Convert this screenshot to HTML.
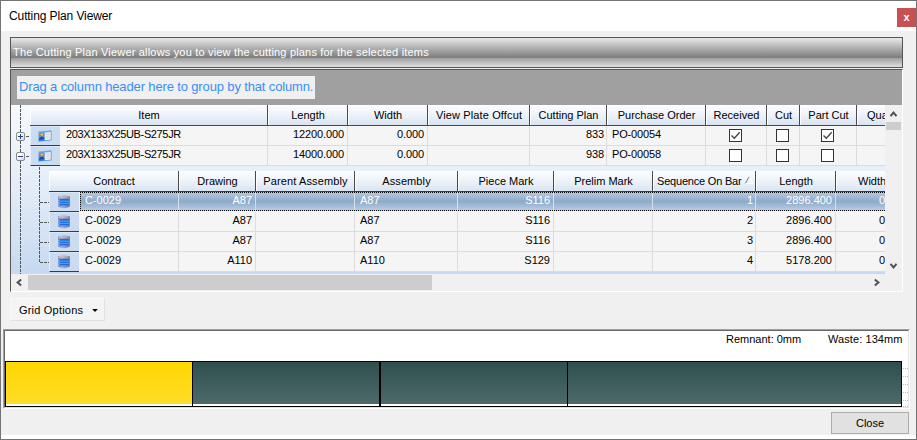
<!DOCTYPE html>
<html><head><meta charset="utf-8"><title>Cutting Plan Viewer</title>
<style>
*{box-sizing:border-box;margin:0;padding:0}
html,body{width:917px;height:440px;overflow:hidden;background:#f0f0f0}
body{position:relative;font-family:"Liberation Sans",sans-serif;font-size:11px;color:#000;line-height:1}
.a{position:absolute}
.t{position:absolute;white-space:nowrap;line-height:14px;height:14px}
.r{text-align:right}
.n{letter-spacing:-0.1px}
.c{text-align:center}
.hd{position:absolute;background:linear-gradient(to bottom,#fbfcfe 0%,#eef3fa 45%,#d9e4f3 100%);border-left:1px solid #fff;border-top:1px solid #fff}
.hs{position:absolute;width:1px;background:#4a4a4a}
.vs{position:absolute;width:1px;background:#dcdcdc}
.hl{position:absolute;height:1px;background:#dcdcdc}
.rh{position:absolute;background:#ccdcf0;border-left:1px solid #e6eefa;border-top:1px solid #dde8f6;border-bottom:1px solid #1f4080}
.cb{position:absolute;width:13px;height:13px;border:1px solid #333;background:#fff}
.ex{position:absolute;width:9px;height:9px;border:1px solid #8a8a8a;border-radius:2px;background:linear-gradient(135deg,#fff 30%,#d8d8d8)}
</style></head><body>

<div class="a" style="left:0;top:0;width:917px;height:440px;border:1px solid #747474"></div>
<div class="a" style="left:1px;top:1px;width:915px;height:30px;background:#fff"></div>
<div class="a" style="left:1px;top:435px;width:915px;height:4px;background:#fff"></div>
<div class="t" style="left:9px;top:9px;font-size:12px;line-height:15px;height:15px;letter-spacing:-0.1px" id="title">Cutting Plan Viewer</div>
<div class="a" style="left:897px;top:8px;width:19px;height:19px;background:#c75050"></div>
<div class="t" style="left:897px;top:10px;width:19px;text-align:center;color:#fff;font-weight:bold;font-size:11px;line-height:14px" id="xbtn">x</div>
<div class="a" style="left:10px;top:37px;width:893px;height:31px;border:1px solid #555;background:linear-gradient(to bottom,#e8e8e8 0%,#7e7e7e 67%,#a0a0a0 70%,#e0e0e0 100%)"></div>
<div class="t" style="left:13px;top:45px;color:#fff;letter-spacing:0.18px" id="banner">The Cutting Plan Viewer allows you to view the cutting plans for the selected items</div>
<div class="a" style="left:10px;top:69px;width:893px;height:223px;background:#a0a0a0;border-left:1px solid #555;border-top:1px solid #555;border-right:1px solid #fff;border-bottom:1px solid #fff"></div>
<div class="a" style="left:17px;top:76px;width:298px;height:23px;background:#f0f0f0"></div>
<div class="t" style="left:19px;top:79px;font-size:13px;line-height:16px;height:16px;color:#3a8ef8;letter-spacing:-0.14px" id="groupby">Drag a column header here to group by that column.</div>
<div class="a" style="left:11px;top:105px;width:874px;height:169px;background:linear-gradient(to bottom,#f6f9fd 0%,#e3ecf8 50%,#c6d9f0 100%)"></div>
<div class="a" style="left:885px;top:105px;width:17px;height:169px;background:#f0f0f0"></div>
<div class="a" style="left:11px;top:274px;width:891px;height:17px;background:#f0f0f0"></div>
<div class="a" style="left:886px;top:122px;width:15px;height:8px;background:#cdcdcd"></div>
<div class="a" style="left:28px;top:275px;width:404px;height:15px;background:#cdcdcd"></div>
<svg class="a" style="left:886px;top:105px" width="16" height="169" viewBox="0 0 16 169"><path d="M4.5 11.2 L7.5 7.6 L10.5 11.2" fill="none" stroke="#505050" stroke-width="2"/><path d="M4.5 158.8 L7.5 162.4 L10.5 158.8" fill="none" stroke="#505050" stroke-width="2"/></svg>
<svg class="a" style="left:11px;top:274px" width="875" height="17" viewBox="0 0 875 17"><path d="M10.2 5.5 L6.6 8.5 L10.2 11.5" fill="none" stroke="#505050" stroke-width="2"/><path d="M863.8 5.5 L867.4 8.5 L863.8 11.5" fill="none" stroke="#505050" stroke-width="2"/></svg>
<div class="hd" style="left:30px;top:105px;width:855px;height:20px"></div>
<div class="a" style="left:30px;top:125px;width:855px;height:1px;background:#4a4a4a"></div>
<div class="hs" style="left:267px;top:105px;height:21px"></div>
<div class="a" style="left:268px;top:105px;width:1px;height:20px;background:#fff"></div>
<div class="t c" style="left:30px;top:108px;width:238px;" id="ph0">Item</div>
<div class="hs" style="left:347px;top:105px;height:21px"></div>
<div class="a" style="left:348px;top:105px;width:1px;height:20px;background:#fff"></div>
<div class="t c" style="left:268px;top:108px;width:80px;" id="ph1">Length</div>
<div class="hs" style="left:427px;top:105px;height:21px"></div>
<div class="a" style="left:428px;top:105px;width:1px;height:20px;background:#fff"></div>
<div class="t c" style="left:348px;top:108px;width:80px;" id="ph2">Width</div>
<div class="hs" style="left:529px;top:105px;height:21px"></div>
<div class="a" style="left:530px;top:105px;width:1px;height:20px;background:#fff"></div>
<div class="t c" style="left:428px;top:108px;width:102px;letter-spacing:0.13px;" id="ph3">View Plate Offcut</div>
<div class="hs" style="left:606px;top:105px;height:21px"></div>
<div class="a" style="left:607px;top:105px;width:1px;height:20px;background:#fff"></div>
<div class="t c" style="left:530px;top:108px;width:77px;" id="ph4">Cutting Plan</div>
<div class="hs" style="left:705px;top:105px;height:21px"></div>
<div class="a" style="left:706px;top:105px;width:1px;height:20px;background:#fff"></div>
<div class="t c" style="left:607px;top:108px;width:99px;" id="ph5">Purchase Order</div>
<div class="hs" style="left:766px;top:105px;height:21px"></div>
<div class="a" style="left:767px;top:105px;width:1px;height:20px;background:#fff"></div>
<div class="t c" style="left:706px;top:108px;width:61px;" id="ph6">Received</div>
<div class="hs" style="left:799px;top:105px;height:21px"></div>
<div class="a" style="left:800px;top:105px;width:1px;height:20px;background:#fff"></div>
<div class="t c" style="left:767px;top:108px;width:33px;" id="ph7">Cut</div>
<div class="hs" style="left:856px;top:105px;height:21px"></div>
<div class="a" style="left:857px;top:105px;width:1px;height:20px;background:#fff"></div>
<div class="t c" style="left:800px;top:108px;width:57px;" id="ph8">Part Cut</div>
<div class="t" style="left:867px;top:108px;width:18px;overflow:hidden" id="ph9">Qua</div>
<div class="a" style="left:60px;top:126px;width:825px;height:20px;background:#f5f5f5"></div>
<div class="hl" style="left:60px;top:145px;width:825px"></div>
<div class="vs" style="left:267px;top:126px;height:20px"></div>
<div class="vs" style="left:347px;top:126px;height:20px"></div>
<div class="vs" style="left:427px;top:126px;height:20px"></div>
<div class="vs" style="left:529px;top:126px;height:20px"></div>
<div class="vs" style="left:606px;top:126px;height:20px"></div>
<div class="vs" style="left:705px;top:126px;height:20px"></div>
<div class="vs" style="left:766px;top:126px;height:20px"></div>
<div class="vs" style="left:799px;top:126px;height:20px"></div>
<div class="vs" style="left:856px;top:126px;height:20px"></div>
<div class="rh" style="left:30px;top:126px;width:30px;height:20px"></div>
<svg class="a" style="left:38px;top:130px" width="14" height="12" viewBox="0 0 14 12"><defs><linearGradient id="cg0" x1="0" y1="0" x2="0" y2="1"><stop offset="0" stop-color="#6db0f6"/><stop offset="1" stop-color="#2f7fe0"/></linearGradient></defs><path d="M0.5 1.6 L13.5 0.3 L13.5 10.2 L0.5 11.6 Z" fill="url(#cg0)"/><circle cx="3.7" cy="4.6" r="1.7" fill="#f09018" stroke="#c87008" stroke-width="0.4"/><path d="M3 4.3 H4.6 V5 H3.4" fill="none" stroke="#fde0b0" stroke-width="0.6"/><path d="M1.2 8.4 Q3.6 5.2 6.2 8.2 L6.2 9.2 L1.2 9.7 Z" fill="#1a48a8"/><path d="M6.9 2.5 L13.6 1.9 L13.6 9.6 L6.9 10.3 Z" fill="#f6f6f6"/><path d="M12.7 2 L13.7 1.9 L13.7 9.6 L12.7 9.7 Z" fill="#9a9a9a"/><path d="M8 4.2 L12 3.9 M8 6.2 L12 5.9 M8 8.2 L12 7.9" stroke="#c4c4c4" stroke-width="0.8"/><path d="M6.9 2.5 L6.9 10.3" stroke="#e0c8a8" stroke-width="0.5"/></svg>
<div class="t" style="left:66px;top:127px;letter-spacing:-0.36px" id="pi0">203X133X25UB-S275JR</div>
<div class="t r n" style="left:268px;top:127px;width:76px">12200.000</div>
<div class="t r n" style="left:348px;top:127px;width:76px">0.000</div>
<div class="t r n" style="left:530px;top:127px;width:74px">833</div>
<div class="t" style="left:612px;top:127px;letter-spacing:-0.15px">PO-00054</div>
<div class="cb" style="left:729px;top:129px"><svg width="11" height="11" viewBox="0 0 11 11" style="display:block"><path d="M1.5 5.5 L4.3 8.3 L9.7 2.3" fill="none" stroke="#444" stroke-width="1.3"/></svg></div>
<div class="cb" style="left:776px;top:129px"></div>
<div class="cb" style="left:821px;top:129px"><svg width="11" height="11" viewBox="0 0 11 11" style="display:block"><path d="M1.5 5.5 L4.3 8.3 L9.7 2.3" fill="none" stroke="#444" stroke-width="1.3"/></svg></div>
<div class="a" style="left:60px;top:146px;width:825px;height:20px;background:#f5f5f5"></div>
<div class="hl" style="left:60px;top:165px;width:825px"></div>
<div class="vs" style="left:267px;top:146px;height:20px"></div>
<div class="vs" style="left:347px;top:146px;height:20px"></div>
<div class="vs" style="left:427px;top:146px;height:20px"></div>
<div class="vs" style="left:529px;top:146px;height:20px"></div>
<div class="vs" style="left:606px;top:146px;height:20px"></div>
<div class="vs" style="left:705px;top:146px;height:20px"></div>
<div class="vs" style="left:766px;top:146px;height:20px"></div>
<div class="vs" style="left:799px;top:146px;height:20px"></div>
<div class="vs" style="left:856px;top:146px;height:20px"></div>
<div class="rh" style="left:30px;top:146px;width:30px;height:20px"></div>
<svg class="a" style="left:38px;top:150px" width="14" height="12" viewBox="0 0 14 12"><defs><linearGradient id="cg1" x1="0" y1="0" x2="0" y2="1"><stop offset="0" stop-color="#6db0f6"/><stop offset="1" stop-color="#2f7fe0"/></linearGradient></defs><path d="M0.5 1.6 L13.5 0.3 L13.5 10.2 L0.5 11.6 Z" fill="url(#cg1)"/><circle cx="3.7" cy="4.6" r="1.7" fill="#f09018" stroke="#c87008" stroke-width="0.4"/><path d="M3 4.3 H4.6 V5 H3.4" fill="none" stroke="#fde0b0" stroke-width="0.6"/><path d="M1.2 8.4 Q3.6 5.2 6.2 8.2 L6.2 9.2 L1.2 9.7 Z" fill="#1a48a8"/><path d="M6.9 2.5 L13.6 1.9 L13.6 9.6 L6.9 10.3 Z" fill="#f6f6f6"/><path d="M12.7 2 L13.7 1.9 L13.7 9.6 L12.7 9.7 Z" fill="#9a9a9a"/><path d="M8 4.2 L12 3.9 M8 6.2 L12 5.9 M8 8.2 L12 7.9" stroke="#c4c4c4" stroke-width="0.8"/><path d="M6.9 2.5 L6.9 10.3" stroke="#e0c8a8" stroke-width="0.5"/></svg>
<div class="t" style="left:66px;top:147px;letter-spacing:-0.36px" id="pi1">203X133X25UB-S275JR</div>
<div class="t r n" style="left:268px;top:147px;width:76px">14000.000</div>
<div class="t r n" style="left:348px;top:147px;width:76px">0.000</div>
<div class="t r n" style="left:530px;top:147px;width:74px">938</div>
<div class="t" style="left:612px;top:147px;letter-spacing:-0.15px">PO-00058</div>
<div class="cb" style="left:729px;top:149px"></div>
<div class="cb" style="left:776px;top:149px"></div>
<div class="cb" style="left:821px;top:149px"></div>
<div class="a" style="left:20px;top:105px;width:1px;height:169px;background:repeating-linear-gradient(to bottom,#555 0,#555 3px,transparent 3px,transparent 4px)"></div>
<div class="a" style="left:26px;top:136px;width:3px;height:1px;background:#555"></div>
<div class="ex" style="left:16px;top:132px"></div>
<div class="a" style="left:18px;top:136px;width:5px;height:1px;background:#1f3f90"></div>
<div class="a" style="left:20px;top:134px;width:1px;height:5px;background:#1f3f90"></div>
<div class="a" style="left:26px;top:156px;width:3px;height:1px;background:#555"></div>
<div class="ex" style="left:16px;top:152px"></div>
<div class="a" style="left:18px;top:156px;width:5px;height:1px;background:#1f3f90"></div>
<div class="hd" style="left:49px;top:171px;width:836px;height:20px"></div>
<div class="a" style="left:49px;top:191px;width:836px;height:1px;background:#3a3a3a"></div>
<div class="hs" style="left:178px;top:171px;height:21px"></div>
<div class="a" style="left:179px;top:171px;width:1px;height:20px;background:#fff"></div>
<div class="t c" style="left:49px;top:174px;width:130px;" id="ch0">Contract</div>
<div class="hs" style="left:255px;top:171px;height:21px"></div>
<div class="a" style="left:256px;top:171px;width:1px;height:20px;background:#fff"></div>
<div class="t c" style="left:179px;top:174px;width:77px;" id="ch1">Drawing</div>
<div class="hs" style="left:354px;top:171px;height:21px"></div>
<div class="a" style="left:355px;top:171px;width:1px;height:20px;background:#fff"></div>
<div class="t c" style="left:256px;top:174px;width:99px;letter-spacing:0.13px;" id="ch2">Parent Assembly</div>
<div class="hs" style="left:457px;top:171px;height:21px"></div>
<div class="a" style="left:458px;top:171px;width:1px;height:20px;background:#fff"></div>
<div class="t c" style="left:355px;top:174px;width:103px;letter-spacing:0.1px;" id="ch3">Assembly</div>
<div class="hs" style="left:553px;top:171px;height:21px"></div>
<div class="a" style="left:554px;top:171px;width:1px;height:20px;background:#fff"></div>
<div class="t c" style="left:458px;top:174px;width:96px;" id="ch4">Piece Mark</div>
<div class="hs" style="left:652px;top:171px;height:21px"></div>
<div class="a" style="left:653px;top:171px;width:1px;height:20px;background:#fff"></div>
<div class="t c" style="left:554px;top:174px;width:99px;" id="ch5">Prelim Mark</div>
<div class="hs" style="left:755px;top:171px;height:21px"></div>
<div class="a" style="left:756px;top:171px;width:1px;height:20px;background:#fff"></div>
<div class="t" style="left:657px;top:174px;letter-spacing:-0.2px" id="ch6">Sequence On Bar</div>
<svg class="a" style="left:744px;top:176px" width="10" height="9" viewBox="0 0 10 9"><path d="M5.2 1 L8.6 7.5 H1.4" fill="none" stroke="#fff" stroke-width="1.2"/><path d="M1.4 7.3 L5 1" fill="none" stroke="#7c7c7c" stroke-width="1"/></svg>
<div class="hs" style="left:835px;top:171px;height:21px"></div>
<div class="a" style="left:836px;top:171px;width:1px;height:20px;background:#fff"></div>
<div class="t c" style="left:756px;top:174px;width:80px;" id="ch7">Length</div>
<div class="t" style="left:858px;top:174px;width:27px;overflow:hidden" id="ch8">Width</div>
<div class="a" style="left:39px;top:167px;width:1px;height:95px;background:repeating-linear-gradient(to bottom,#555 0,#555 3px,transparent 3px,transparent 4px)"></div>
<div class="a" style="left:80px;top:192px;width:805px;height:19px;background:linear-gradient(to bottom,#b6c9e1 0%,#8daaca 50%,#a9c0db 80%,#bccee5 100%)"></div>
<div class="a" style="left:80px;top:211px;width:805px;height:1px;background:#f5f5f5"></div>
<div class="vs" style="left:178px;top:192px;height:19px;background:#d4dde8"></div>
<div class="vs" style="left:255px;top:192px;height:19px;background:#d4dde8"></div>
<div class="vs" style="left:354px;top:192px;height:19px;background:#d4dde8"></div>
<div class="vs" style="left:457px;top:192px;height:19px;background:#d4dde8"></div>
<div class="vs" style="left:553px;top:192px;height:19px;background:#d4dde8"></div>
<div class="vs" style="left:652px;top:192px;height:19px;background:#d4dde8"></div>
<div class="vs" style="left:755px;top:192px;height:19px;background:#d4dde8"></div>
<div class="vs" style="left:835px;top:192px;height:19px;background:#d4dde8"></div>
<div class="a" style="left:80px;top:192px;width:805px;height:19px;border:1px dotted #000;border-right:none"></div>
<div class="rh" style="left:49px;top:192px;width:30px;height:20px"></div>
<div class="a" style="left:79px;top:192px;width:1px;height:20px;background:#f2f6fb"></div>
<div class="a" style="left:40px;top:202px;width:9px;height:1px;background:repeating-linear-gradient(to right,#555 0,#555 3px,transparent 3px,transparent 4px)"></div>
<svg class="a" style="left:58px;top:195px" width="12" height="14" viewBox="0 0 12 14"><defs><linearGradient id="dg0" x1="0" y1="0" x2="1" y2="0"><stop offset="0" stop-color="#6e6eae"/><stop offset="0.3" stop-color="#a6a6d0"/><stop offset="0.7" stop-color="#8e8ec0"/><stop offset="1" stop-color="#6c6898"/></linearGradient><linearGradient id="dt0" x1="0" y1="0" x2="1" y2="1"><stop offset="0" stop-color="#dcdce8"/><stop offset="1" stop-color="#84849e"/></linearGradient></defs><path d="M0.2 1.2 Q6 -0.4 11.8 1.2 L11.8 11.6 Q6 15 0.2 11.6 Z" fill="url(#dg0)"/><path d="M0.6 1.4 Q6 0 11.4 1.4 L11.4 3.6 H0.6 Z" fill="url(#dt0)"/><rect x="0.6" y="4" width="10.2" height="6.4" fill="#1470e6"/><path d="M0.6 6.2 H10.8 M0.6 8.4 H10.8" stroke="#a8b8e4" stroke-width="0.6"/><path d="M0.9 4.5 V10.5" stroke="#cfe0fa" stroke-width="0.9" stroke-dasharray="1.4 0.9"/></svg>
<div class="t" style="left:85px;top:193px;color:#fff">C-0029</div>
<div class="t r" style="left:179px;top:193px;width:73px;color:#fff">A87</div>
<div class="t" style="left:360px;top:193px;color:#fff">A87</div>
<div class="t r" style="left:458px;top:193px;width:92px;color:#fff">S116</div>
<div class="t r" style="left:653px;top:193px;width:100px;color:#fff">1</div>
<div class="t r" style="left:756px;top:193px;width:76px;color:#fff">2896.400</div>
<div class="t" style="left:879px;top:193px;width:6px;overflow:hidden;color:#fff">0</div>
<div class="a" style="left:80px;top:212px;width:805px;height:20px;background:#f5f5f5"></div>
<div class="hl" style="left:80px;top:231px;width:805px"></div>
<div class="vs" style="left:178px;top:212px;height:20px;background:#dcdcdc"></div>
<div class="vs" style="left:255px;top:212px;height:20px;background:#dcdcdc"></div>
<div class="vs" style="left:354px;top:212px;height:20px;background:#dcdcdc"></div>
<div class="vs" style="left:457px;top:212px;height:20px;background:#dcdcdc"></div>
<div class="vs" style="left:553px;top:212px;height:20px;background:#dcdcdc"></div>
<div class="vs" style="left:652px;top:212px;height:20px;background:#dcdcdc"></div>
<div class="vs" style="left:755px;top:212px;height:20px;background:#dcdcdc"></div>
<div class="vs" style="left:835px;top:212px;height:20px;background:#dcdcdc"></div>
<div class="rh" style="left:49px;top:212px;width:30px;height:20px"></div>
<div class="a" style="left:79px;top:212px;width:1px;height:20px;background:#f2f6fb"></div>
<div class="a" style="left:40px;top:222px;width:9px;height:1px;background:repeating-linear-gradient(to right,#555 0,#555 3px,transparent 3px,transparent 4px)"></div>
<svg class="a" style="left:58px;top:215px" width="12" height="14" viewBox="0 0 12 14"><defs><linearGradient id="dg1" x1="0" y1="0" x2="1" y2="0"><stop offset="0" stop-color="#6e6eae"/><stop offset="0.3" stop-color="#a6a6d0"/><stop offset="0.7" stop-color="#8e8ec0"/><stop offset="1" stop-color="#6c6898"/></linearGradient><linearGradient id="dt1" x1="0" y1="0" x2="1" y2="1"><stop offset="0" stop-color="#dcdce8"/><stop offset="1" stop-color="#84849e"/></linearGradient></defs><path d="M0.2 1.2 Q6 -0.4 11.8 1.2 L11.8 11.6 Q6 15 0.2 11.6 Z" fill="url(#dg1)"/><path d="M0.6 1.4 Q6 0 11.4 1.4 L11.4 3.6 H0.6 Z" fill="url(#dt1)"/><rect x="0.6" y="4" width="10.2" height="6.4" fill="#1470e6"/><path d="M0.6 6.2 H10.8 M0.6 8.4 H10.8" stroke="#a8b8e4" stroke-width="0.6"/><path d="M0.9 4.5 V10.5" stroke="#cfe0fa" stroke-width="0.9" stroke-dasharray="1.4 0.9"/></svg>
<div class="t" style="left:85px;top:213px;color:#000">C-0029</div>
<div class="t r" style="left:179px;top:213px;width:73px;color:#000">A87</div>
<div class="t" style="left:360px;top:213px;color:#000">A87</div>
<div class="t r" style="left:458px;top:213px;width:92px;color:#000">S116</div>
<div class="t r" style="left:653px;top:213px;width:100px;color:#000">2</div>
<div class="t r" style="left:756px;top:213px;width:76px;color:#000">2896.400</div>
<div class="t" style="left:879px;top:213px;width:6px;overflow:hidden;color:#000">0</div>
<div class="a" style="left:80px;top:232px;width:805px;height:20px;background:#f5f5f5"></div>
<div class="hl" style="left:80px;top:251px;width:805px"></div>
<div class="vs" style="left:178px;top:232px;height:20px;background:#dcdcdc"></div>
<div class="vs" style="left:255px;top:232px;height:20px;background:#dcdcdc"></div>
<div class="vs" style="left:354px;top:232px;height:20px;background:#dcdcdc"></div>
<div class="vs" style="left:457px;top:232px;height:20px;background:#dcdcdc"></div>
<div class="vs" style="left:553px;top:232px;height:20px;background:#dcdcdc"></div>
<div class="vs" style="left:652px;top:232px;height:20px;background:#dcdcdc"></div>
<div class="vs" style="left:755px;top:232px;height:20px;background:#dcdcdc"></div>
<div class="vs" style="left:835px;top:232px;height:20px;background:#dcdcdc"></div>
<div class="rh" style="left:49px;top:232px;width:30px;height:20px"></div>
<div class="a" style="left:79px;top:232px;width:1px;height:20px;background:#f2f6fb"></div>
<div class="a" style="left:40px;top:242px;width:9px;height:1px;background:repeating-linear-gradient(to right,#555 0,#555 3px,transparent 3px,transparent 4px)"></div>
<svg class="a" style="left:58px;top:235px" width="12" height="14" viewBox="0 0 12 14"><defs><linearGradient id="dg2" x1="0" y1="0" x2="1" y2="0"><stop offset="0" stop-color="#6e6eae"/><stop offset="0.3" stop-color="#a6a6d0"/><stop offset="0.7" stop-color="#8e8ec0"/><stop offset="1" stop-color="#6c6898"/></linearGradient><linearGradient id="dt2" x1="0" y1="0" x2="1" y2="1"><stop offset="0" stop-color="#dcdce8"/><stop offset="1" stop-color="#84849e"/></linearGradient></defs><path d="M0.2 1.2 Q6 -0.4 11.8 1.2 L11.8 11.6 Q6 15 0.2 11.6 Z" fill="url(#dg2)"/><path d="M0.6 1.4 Q6 0 11.4 1.4 L11.4 3.6 H0.6 Z" fill="url(#dt2)"/><rect x="0.6" y="4" width="10.2" height="6.4" fill="#1470e6"/><path d="M0.6 6.2 H10.8 M0.6 8.4 H10.8" stroke="#a8b8e4" stroke-width="0.6"/><path d="M0.9 4.5 V10.5" stroke="#cfe0fa" stroke-width="0.9" stroke-dasharray="1.4 0.9"/></svg>
<div class="t" style="left:85px;top:233px;color:#000">C-0029</div>
<div class="t r" style="left:179px;top:233px;width:73px;color:#000">A87</div>
<div class="t" style="left:360px;top:233px;color:#000">A87</div>
<div class="t r" style="left:458px;top:233px;width:92px;color:#000">S116</div>
<div class="t r" style="left:653px;top:233px;width:100px;color:#000">3</div>
<div class="t r" style="left:756px;top:233px;width:76px;color:#000">2896.400</div>
<div class="t" style="left:879px;top:233px;width:6px;overflow:hidden;color:#000">0</div>
<div class="a" style="left:80px;top:252px;width:805px;height:20px;background:#f5f5f5"></div>
<div class="hl" style="left:80px;top:271px;width:805px"></div>
<div class="vs" style="left:178px;top:252px;height:20px;background:#dcdcdc"></div>
<div class="vs" style="left:255px;top:252px;height:20px;background:#dcdcdc"></div>
<div class="vs" style="left:354px;top:252px;height:20px;background:#dcdcdc"></div>
<div class="vs" style="left:457px;top:252px;height:20px;background:#dcdcdc"></div>
<div class="vs" style="left:553px;top:252px;height:20px;background:#dcdcdc"></div>
<div class="vs" style="left:652px;top:252px;height:20px;background:#dcdcdc"></div>
<div class="vs" style="left:755px;top:252px;height:20px;background:#dcdcdc"></div>
<div class="vs" style="left:835px;top:252px;height:20px;background:#dcdcdc"></div>
<div class="rh" style="left:49px;top:252px;width:30px;height:20px"></div>
<div class="a" style="left:79px;top:252px;width:1px;height:20px;background:#f2f6fb"></div>
<div class="a" style="left:40px;top:262px;width:9px;height:1px;background:repeating-linear-gradient(to right,#555 0,#555 3px,transparent 3px,transparent 4px)"></div>
<svg class="a" style="left:58px;top:255px" width="12" height="14" viewBox="0 0 12 14"><defs><linearGradient id="dg3" x1="0" y1="0" x2="1" y2="0"><stop offset="0" stop-color="#6e6eae"/><stop offset="0.3" stop-color="#a6a6d0"/><stop offset="0.7" stop-color="#8e8ec0"/><stop offset="1" stop-color="#6c6898"/></linearGradient><linearGradient id="dt3" x1="0" y1="0" x2="1" y2="1"><stop offset="0" stop-color="#dcdce8"/><stop offset="1" stop-color="#84849e"/></linearGradient></defs><path d="M0.2 1.2 Q6 -0.4 11.8 1.2 L11.8 11.6 Q6 15 0.2 11.6 Z" fill="url(#dg3)"/><path d="M0.6 1.4 Q6 0 11.4 1.4 L11.4 3.6 H0.6 Z" fill="url(#dt3)"/><rect x="0.6" y="4" width="10.2" height="6.4" fill="#1470e6"/><path d="M0.6 6.2 H10.8 M0.6 8.4 H10.8" stroke="#a8b8e4" stroke-width="0.6"/><path d="M0.9 4.5 V10.5" stroke="#cfe0fa" stroke-width="0.9" stroke-dasharray="1.4 0.9"/></svg>
<div class="t" style="left:85px;top:253px;color:#000">C-0029</div>
<div class="t r" style="left:179px;top:253px;width:73px;color:#000">A110</div>
<div class="t" style="left:360px;top:253px;color:#000">A110</div>
<div class="t r" style="left:458px;top:253px;width:92px;color:#000">S129</div>
<div class="t r" style="left:653px;top:253px;width:100px;color:#000">4</div>
<div class="t r" style="left:756px;top:253px;width:76px;color:#000">5178.200</div>
<div class="t" style="left:879px;top:253px;width:6px;overflow:hidden;color:#000">0</div>
<div class="a" style="left:10px;top:298px;width:95px;height:23px;background:#f4f4f4;border:1px solid #e4e7ea;border-top-color:#fafafa;border-left-color:#f8f8f8;border-right-color:#dde1e5;border-bottom-color:#dde1e5"></div>
<div class="t" style="left:19px;top:303px;letter-spacing:0.2px" id="gopt">Grid Options</div>
<svg class="a" style="left:92px;top:309px" width="6" height="4" viewBox="0 0 6 4"><path d="M0.2 0 H5.8 L3 3 Z" fill="#000"/></svg>
<div class="a" style="left:3px;top:329px;width:907px;height:80px;background:#fff;border-left:1px solid #a0a0a0;border-top:1px solid #a0a0a0;border-right:1px solid #fff;border-bottom:1px solid #fff"></div>
<div class="a" style="left:4px;top:330px;width:905px;height:78px;border-left:1px solid #696969;border-top:1px solid #696969;border-right:1px solid #e3e3e3;border-bottom:1px solid #e3e3e3"></div>
<div class="t" style="left:726px;top:332px" id="rem">Remnant: 0mm</div>
<div class="t" style="left:828px;top:332px;letter-spacing:0.08px" id="wst">Waste: 134mm</div>
<div class="a" style="left:5px;top:361px;width:897px;height:46px;border:1px solid #000;background:#fff"></div>
<div class="a" style="left:6px;top:362px;width:186px;height:42px;background:linear-gradient(to bottom,#ffd700,#ffdc2a)"></div>
<div class="a" style="left:193px;top:362px;width:708px;height:42px;background:linear-gradient(to bottom,#2f4f4f,#4d6a6a)"></div>
<div class="a" style="left:192px;top:361px;width:1px;height:46px;background:#000"></div>
<div class="a" style="left:379px;top:361px;width:2px;height:46px;background:#000"></div>
<div class="a" style="left:567px;top:361px;width:1px;height:46px;background:#000"></div>
<div class="a" style="left:903px;top:368px;width:5px;height:1px;background:repeating-linear-gradient(to right,#c0c0c0 0,#c0c0c0 1px,transparent 1px,transparent 2px)"></div>
<div class="a" style="left:903px;top:376px;width:5px;height:1px;background:repeating-linear-gradient(to right,#c0c0c0 0,#c0c0c0 1px,transparent 1px,transparent 2px)"></div>
<div class="a" style="left:903px;top:384px;width:5px;height:1px;background:repeating-linear-gradient(to right,#c0c0c0 0,#c0c0c0 1px,transparent 1px,transparent 2px)"></div>
<div class="a" style="left:903px;top:392px;width:5px;height:1px;background:repeating-linear-gradient(to right,#c0c0c0 0,#c0c0c0 1px,transparent 1px,transparent 2px)"></div>
<div class="a" style="left:903px;top:400px;width:5px;height:1px;background:repeating-linear-gradient(to right,#c0c0c0 0,#c0c0c0 1px,transparent 1px,transparent 2px)"></div>
<div class="a" style="left:903px;top:406px;width:5px;height:1px;background:repeating-linear-gradient(to right,#c0c0c0 0,#c0c0c0 1px,transparent 1px,transparent 2px)"></div>
<div class="a" style="left:831px;top:412px;width:78px;height:22px;background:#e1e1e1;border:1px solid #adadad"></div>
<div class="t c" style="left:831px;top:416px;width:78px" id="closeb">Close</div>
</body></html>
